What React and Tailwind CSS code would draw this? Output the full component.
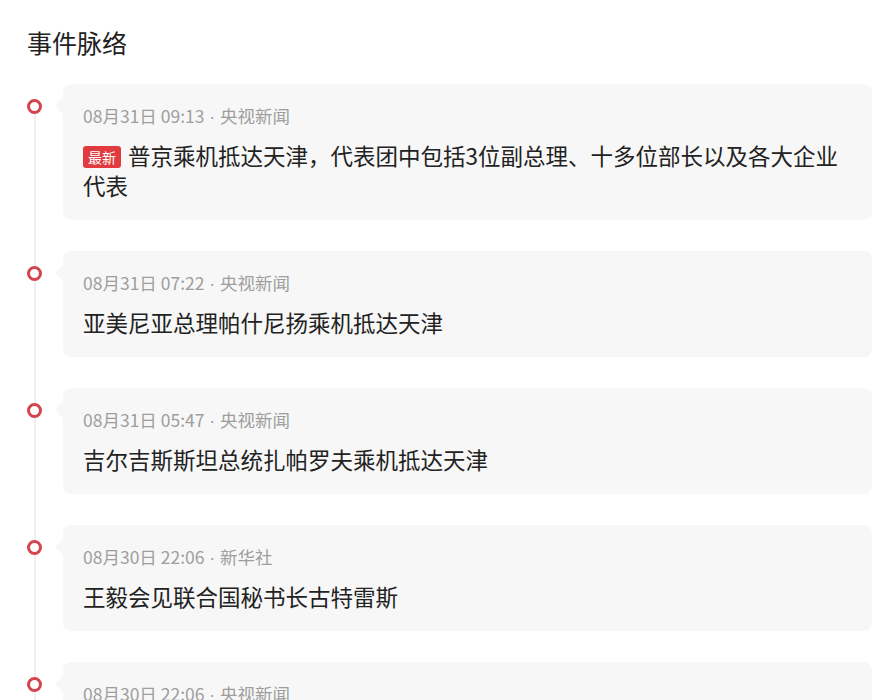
import React from 'react'

const events = [
  { time: '08月31日 09:13', source: '央视新闻', title: '普京乘机抵达天津，代表团中包括3位副总理、十多位部长以及各大企业代表', latest: true },
  { time: '08月31日 07:22', source: '央视新闻', title: '亚美尼亚总理帕什尼扬乘机抵达天津' },
  { time: '08月31日 05:47', source: '央视新闻', title: '吉尔吉斯斯坦总统扎帕罗夫乘机抵达天津' },
  { time: '08月30日 22:06', source: '新华社', title: '王毅会见联合国秘书长古特雷斯' },
  { time: '08月30日 22:06', source: '央视新闻', title: '上合组织天津峰会各项筹备工作已基本就绪' },
]

function EventItem({ item, first }) {
  return (
    <div className="flex">
      <div className="flex w-[15px] shrink-0 flex-col items-center">
        <div className={`h-[15px] w-[2px] ${first ? 'bg-transparent' : 'bg-[#efefef]'}`} />
        <div className="h-[15px] w-[15px] shrink-0 rounded-full border-[3px] border-[#d4444c] bg-white" />
        <div className="w-[2px] flex-1 bg-[#efefef]" />
      </div>
      <div className="ml-[21px] flex-1 pb-[31px]">
        <div className="relative rounded-lg bg-[#f7f7f7] px-5 pt-5 pb-5">
          <div className="absolute top-[14px] left-[-8px] h-0 w-0 border-y-[8px] border-r-[8px] border-y-transparent border-r-[#f7f7f7]" />
          <div className="text-[17.5px] leading-6 text-[#9e9e9e]">
            {item.time}
            <span className="font-['Liberation_Sans',sans-serif]"> · </span>
            {item.source}
          </div>
          <div className="mt-[11px] text-[22.5px] leading-[30px] text-[#222]">
            {item.latest && (
              <span className="mr-[7px] inline-block rounded-[3px] bg-[#e13b40] px-[5px] align-[2px] text-[14px] leading-[22px] text-white">
                最新
              </span>
            )}
            {item.title}
          </div>
        </div>
      </div>
    </div>
  )
}

export default function App() {
  return (
    <div className="min-h-screen bg-white pt-6 pr-[9px] pl-[27px] font-['Noto_Sans_CJK_SC',sans-serif]">
      <h1 className="text-[25px] leading-9 text-[#222]">事件脉络</h1>
      <div className="mt-6">
        {events.map((item, i) => (
          <EventItem key={i} item={item} first={i === 0} />
        ))}
      </div>
    </div>
  )
}
